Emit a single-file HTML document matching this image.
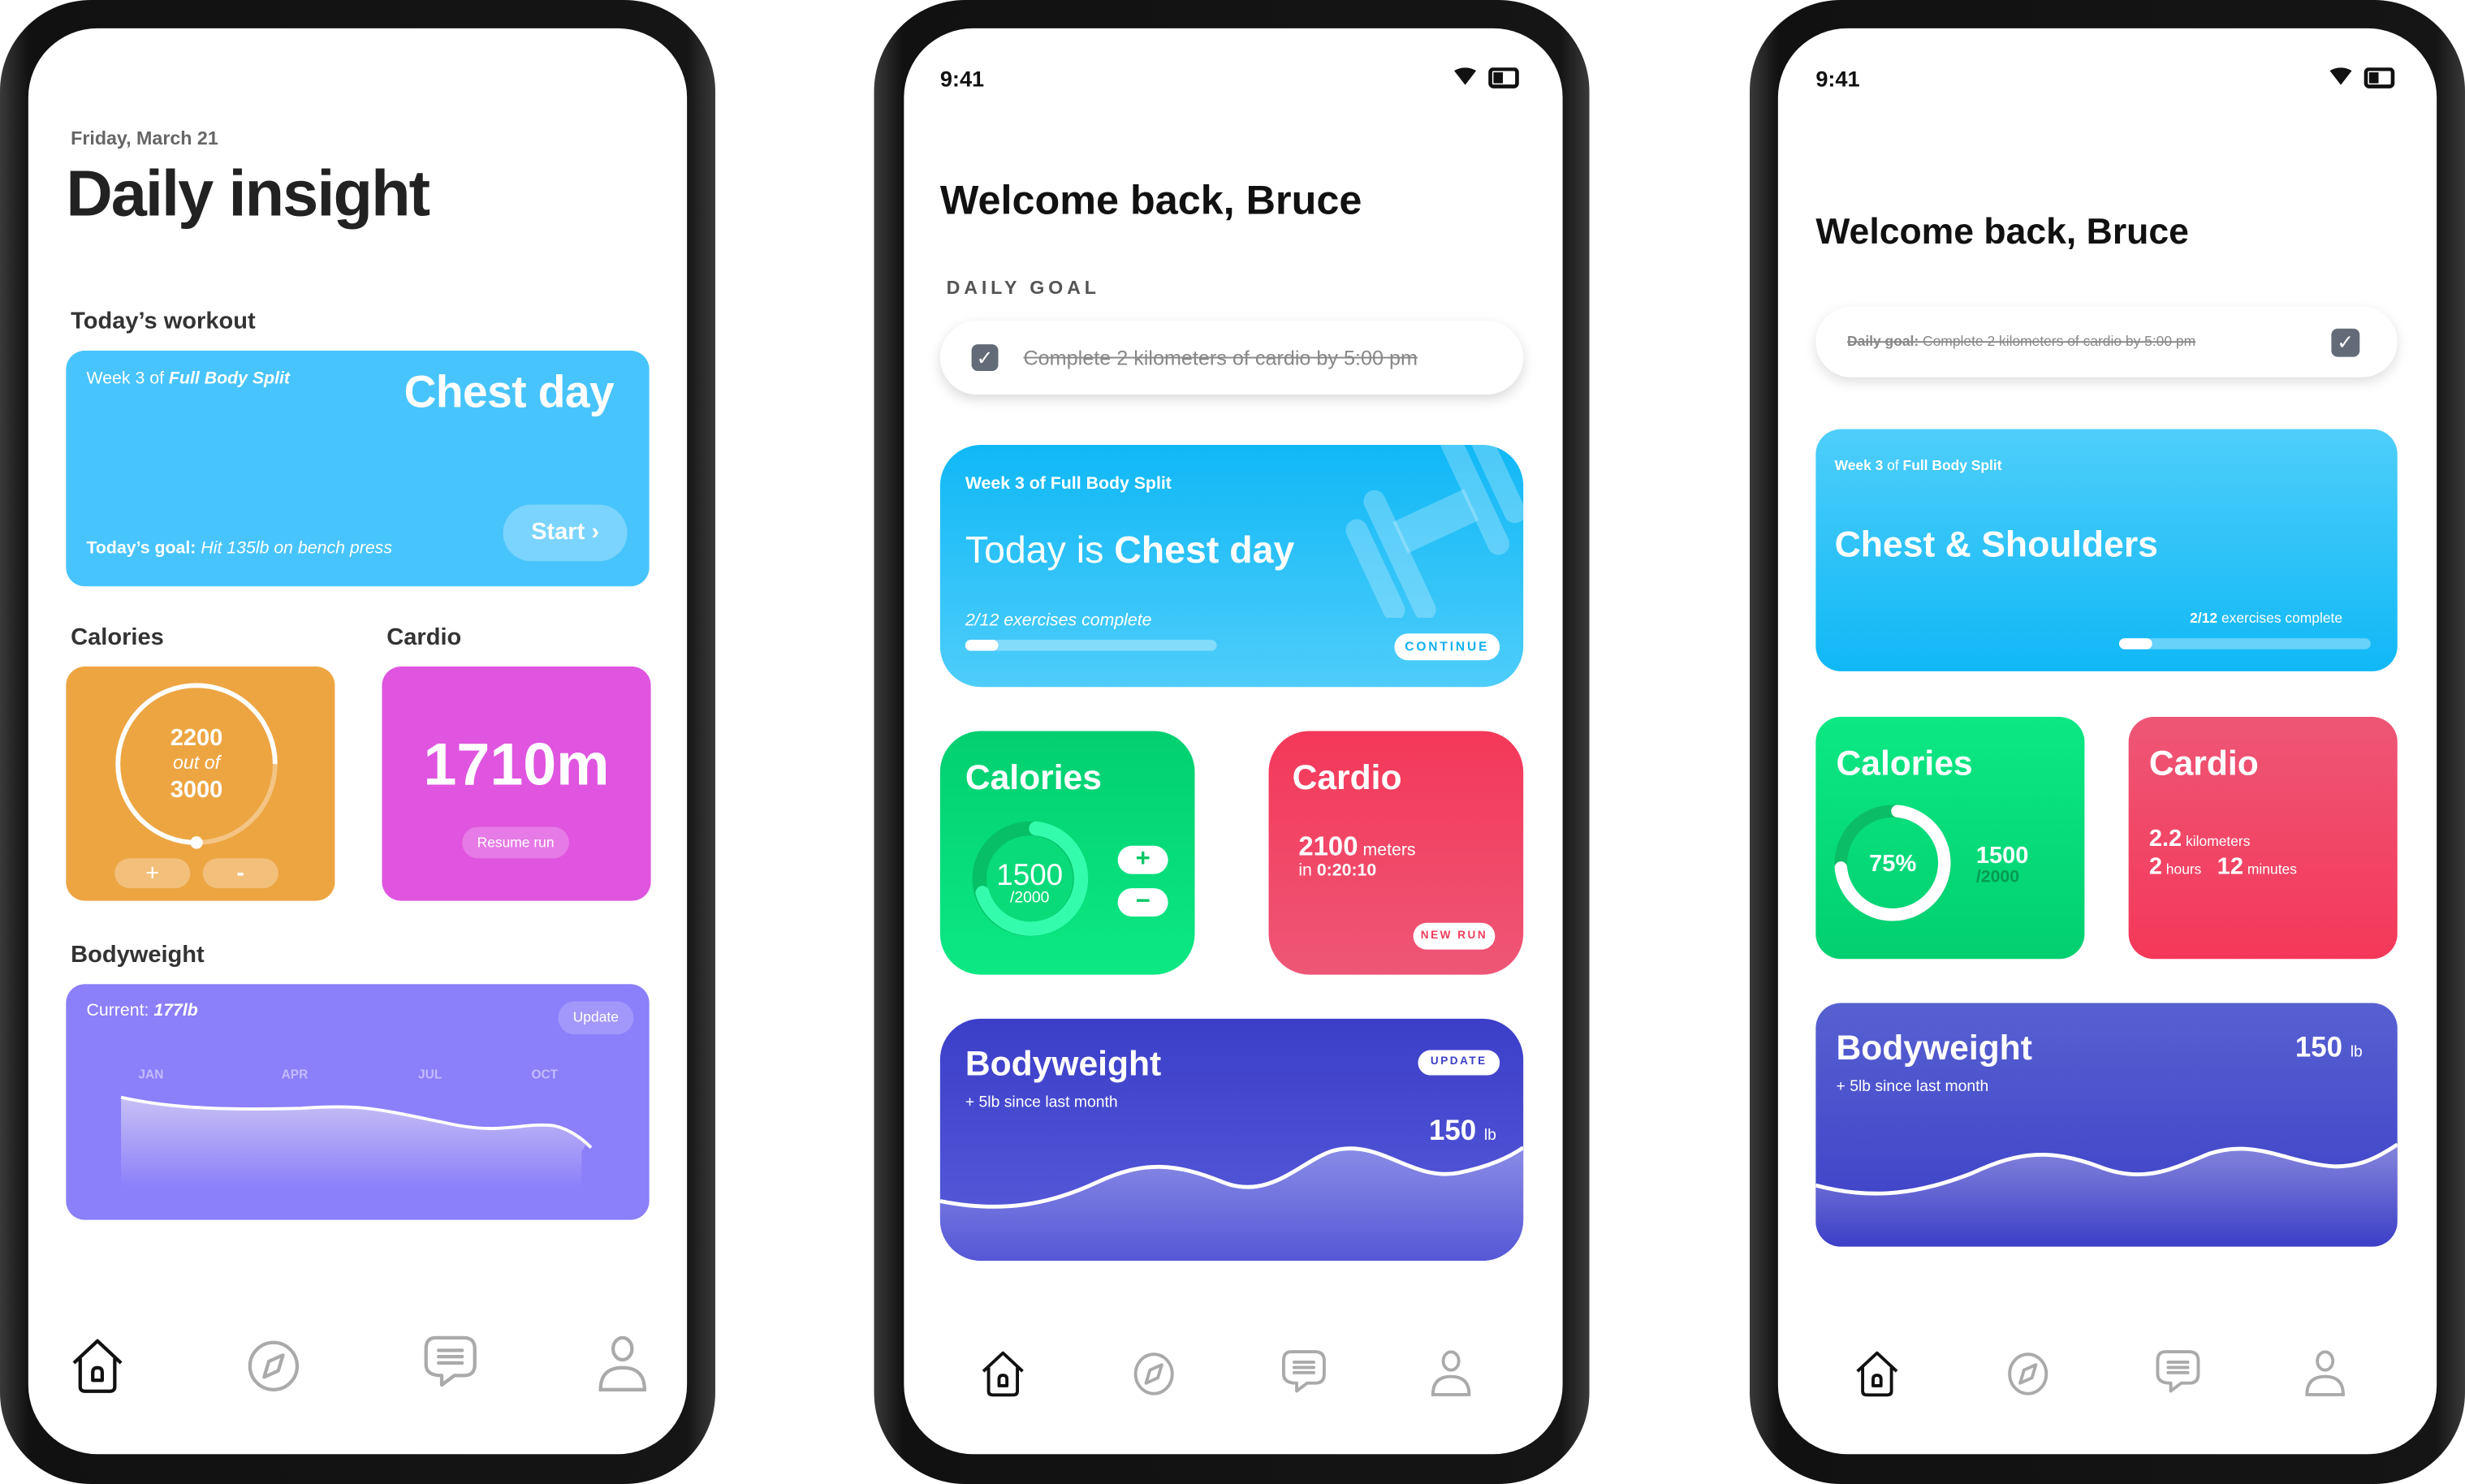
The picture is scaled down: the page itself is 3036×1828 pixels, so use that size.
<!DOCTYPE html>
<html><head><meta charset="utf-8"><style>
html,body{margin:0;padding:0;background:#fff;width:3036px;height:1828px;overflow:hidden}
#s{position:absolute;left:0;top:0;width:1568px;height:944px;transform:scale(1.93622,1.93644);transform-origin:0 0;font-family:"Liberation Sans",sans-serif}
.a{position:absolute;line-height:1;white-space:nowrap}
.ph{position:absolute;top:0;width:455px;height:944px;border-radius:58px;background:linear-gradient(90deg,#3a3a3a,#111 4%,#151515 96%,#3a3a3a)}
.sc{position:absolute;top:18px;width:419px;height:907px;border-radius:44px;background:#fff;overflow:hidden}
.w{color:#fff}
.b{font-weight:bold}
.pill{position:absolute;border-radius:20px;text-align:center;font-weight:bold}
</style></head><body><div id="s">

<!-- PHONE 1 -->
<div class="ph" style="left:0"></div>
<div class="sc" style="left:18px">
 <div class="a b" style="left:27px;top:64px;font-size:12px;color:#666">Friday, March 21</div>
 <div class="a b" style="left:24px;top:85px;font-size:41px;color:#222;letter-spacing:-1px">Daily insight</div>
 <div class="a b" style="left:27px;top:179px;font-size:15px;color:#333">Today’s workout</div>
 <div class="a" style="left:24px;top:205px;width:371px;height:150px;border-radius:12px;background:#48c4fc">
  <div class="a w" style="left:13px;top:13px;font-size:11px">Week 3 of <b><i>Full Body Split</i></b></div>
  <div class="a w b" style="left:215px;top:13px;font-size:28.5px;letter-spacing:-0.3px">Chest day</div>
  <div class="pill w" style="left:278px;top:98px;width:79px;height:36px;line-height:36px;background:rgba(255,255,255,.28);font-size:15px">Start ›</div>
  <div class="a w" style="left:13px;top:121px;font-size:11px"><b>Today’s goal:</b> <i>Hit 135lb on bench press</i></div>
 </div>
 <div class="a b" style="left:27px;top:380px;font-size:15px;color:#333">Calories</div>
 <div class="a b" style="left:228px;top:380px;font-size:15px;color:#333">Cardio</div>
 <div class="a" style="left:24px;top:406px;width:171px;height:149px;border-radius:12px;background:#eda542">
  <svg class="a" style="left:0;top:0" width="171" height="149"><circle cx="83" cy="62" r="50" fill="none" stroke="rgba(255,255,255,.35)" stroke-width="3"/><path d="M133 62 A50 50 0 1 0 83 112" fill="none" stroke="#fff" stroke-width="3"/><circle cx="83" cy="112" r="4" fill="#fff"/></svg>
  <div class="a w b" style="left:0;width:166px;text-align:center;top:38px;font-size:15px">2200</div>
  <div class="a w" style="left:0;width:166px;text-align:center;top:55px;font-size:12px;font-style:italic">out of</div>
  <div class="a w b" style="left:0;width:166px;text-align:center;top:71px;font-size:15px">3000</div>
  <div class="pill w" style="left:31px;top:122px;width:48px;height:19px;line-height:19px;background:rgba(255,255,255,.3);font-size:15px;font-weight:normal">+</div>
  <div class="pill w" style="left:87px;top:122px;width:48px;height:19px;line-height:19px;background:rgba(255,255,255,.3);font-size:15px">-</div>
 </div>
 <div class="a" style="left:225px;top:406px;width:171px;height:149px;border-radius:12px;background:#df55df">
  <div class="a w b" style="left:0;width:171px;text-align:center;top:44px;font-size:38px">1710m</div>
  <div class="pill w" style="left:51px;top:102px;width:68px;height:20px;line-height:20px;background:rgba(255,255,255,.22);font-size:9px;font-weight:normal">Resume run</div>
 </div>
 <div class="a b" style="left:27px;top:582px;font-size:15px;color:#333">Bodyweight</div>
 <div class="a" style="left:24px;top:608px;width:371px;height:150px;border-radius:12px;background:#8b7ffa;overflow:hidden">
  <div class="a w" style="left:13px;top:12px;font-size:11px">Current: <b><i>177lb</i></b></div>
  <div class="pill w" style="left:313px;top:11px;width:48px;height:21px;line-height:21px;background:rgba(255,255,255,.2);font-size:9px;font-weight:normal">Update</div>
  <div class="a b" style="left:46px;top:54px;font-size:8px;color:#c4bcff">JAN</div>
  <div class="a b" style="left:137px;top:54px;font-size:8px;color:#c4bcff">APR</div>
  <div class="a b" style="left:224px;top:54px;font-size:8px;color:#c4bcff">JUL</div>
  <div class="a b" style="left:296px;top:54px;font-size:8px;color:#c4bcff">OCT</div>
  <svg class="a" style="left:0;top:0" width="371" height="150"><defs><linearGradient id="g1" x1="0" y1="0" x2="0" y2="1"><stop offset="0" stop-color="#c8c0f5"/><stop offset="1" stop-color="#8b7ffa"/></linearGradient></defs>
  <path d="M35 72 C70 80 110 80 150 79 C190 76 200 80 250 90 C280 95 290 88 310 90 C325 93 335 100 328 106 L328 130 L35 130Z" fill="url(#g1)"/>
  <path d="M35 72 C70 80 110 80 150 79 C190 76 200 80 250 90 C280 95 290 88 310 90 C320 92 328 98 334 104" fill="none" stroke="#fff" stroke-width="2"/></svg>
 </div>
 <svg class="a" style="left:26px;top:833px" width="36" height="36" viewBox="0 0 36 36" fill="none" stroke="#111" stroke-width="2.2" stroke-linejoin="round"><path d="M3 16 L18 2 L33 16 M7 13 V31 Q7 34 10 34 H26 Q29 34 29 31 V13"/><path d="M15 27 V22 Q15 19 18 19 Q21 19 21 22 V27 Z"/></svg>
 <svg class="a" style="left:138px;top:833px" width="36" height="36" viewBox="0 0 36 36" fill="none" stroke="#aaa" stroke-width="2.2" stroke-linejoin="round"><circle cx="18" cy="18" r="15"/><path d="M24 11 L21 21 L12 25 L15 15 Z"/></svg>
 <svg class="a" style="left:250px;top:831px" width="36" height="38" viewBox="0 0 36 38" fill="none" stroke="#aaa" stroke-width="2.2" stroke-linecap="round" stroke-linejoin="round"><path d="M9 2 H27 Q34 2 34 9 V19 Q34 26 27 26 H21 L13 32 V26 Q3 26 3 19 V9 Q3 2 9 2Z"/><path d="M11 10 H26 M11 14 H26 M11 18 H26"/></svg>
 <svg class="a" style="left:361px;top:831px" width="34" height="38" viewBox="0 0 34 38" fill="none" stroke="#aaa" stroke-width="2.2"><ellipse cx="17" cy="9" rx="6" ry="7"/><path d="M3 35 Q3 21 17 21 Q31 21 31 35 Z"/></svg>
</div>

<!-- PHONE 2 -->
<div class="ph" style="left:556px"></div>
<div class="sc" style="left:575px">
 <div class="a b" style="left:23px;top:25px;font-size:14px;color:#111">9:41</div>
 <svg class="a" style="left:349px;top:25px" width="44" height="14"><path d="M1 2 Q8 -2 15 2 L8 11 Z" fill="#111"/><rect x="24" y="1" width="17" height="11" rx="2" fill="none" stroke="#111" stroke-width="2.4"/><rect x="26" y="3" width="6" height="7" fill="#111"/></svg>
 <div class="a b" style="left:23px;top:96px;font-size:26px;color:#111">Welcome back, Bruce</div>
 <div class="a b" style="left:27px;top:159px;font-size:12px;color:#555;letter-spacing:2.5px">DAILY GOAL</div>
 <div class="a" style="left:23px;top:186px;width:371px;height:47px;border-radius:24px;background:#fff;box-shadow:0 3px 8px rgba(0,0,0,.15)">
  <div class="a" style="left:20px;top:15px;width:17px;height:17px;border-radius:4px;background:#636b78;color:#fff;font-size:13px;text-align:center;line-height:17px">✓</div>
  <div class="a" style="left:53px;top:17px;font-size:13px;color:#888;text-decoration:line-through">Complete 2 kilometers of cardio by 5:00 pm</div>
 </div>
 <div class="a" style="left:23px;top:265px;width:371px;height:154px;border-radius:26px;background:linear-gradient(180deg,#10b8f6,#4ecdfa);overflow:hidden">
  <svg class="a" style="left:230px;top:-10px" width="150" height="120" fill="rgba(255,255,255,.25)"><g transform="rotate(-25 75 60)"><rect x="30" y="40" width="14" height="70" rx="7"/><rect x="48" y="28" width="14" height="90" rx="7"/><rect x="60" y="52" width="50" height="22"/><rect x="108" y="10" width="14" height="90" rx="7"/><rect x="126" y="16" width="14" height="70" rx="7"/></g></svg>
  <div class="a w b" style="left:16px;top:20px;font-size:11px">Week 3 of Full Body Split</div>
  <div class="a w" style="left:16px;top:56px;font-size:24px">Today is <b>Chest day</b></div>
  <div class="a w" style="left:16px;top:107px;font-size:11px;font-style:italic">2/12 exercises complete</div>
  <div class="a" style="left:16px;top:124px;width:160px;height:7px;border-radius:4px;background:rgba(255,255,255,.35)"><div class="a" style="left:0;top:0;width:21px;height:7px;border-radius:4px;background:#fff"></div></div>
  <div class="pill" style="left:289px;top:120px;width:67px;height:17px;line-height:17px;background:#fff;color:#10b0ef;font-size:8px;letter-spacing:1.5px">CONTINUE</div>
 </div>
 <div class="a" style="left:23px;top:447px;width:162px;height:155px;border-radius:26px;background:linear-gradient(180deg,#02cf70,#0ce884)">
  <div class="a w b" style="left:16px;top:19px;font-size:22px">Calories</div>
  <svg class="a" style="left:16px;top:52px" width="84" height="86"><circle cx="41" cy="42" r="32" fill="none" stroke="#06bf66" stroke-width="9"/><path d="M45 10 A32 32 0 1 1 11 51" fill="none" stroke="#33fdad" stroke-width="9" stroke-linecap="round"/><circle cx="41" cy="42" r="27" fill="#0adb7a"/></svg>
  <div class="a w" style="left:16px;top:83px;width:82px;text-align:center;font-size:19px">1500</div>
  <div class="a w" style="left:16px;top:102px;width:82px;text-align:center;font-size:10px">/2000</div>
  <div class="pill" style="left:113px;top:73px;width:32px;height:18px;line-height:18px;background:#fff;color:#05c765;font-size:16px">+</div>
  <div class="pill" style="left:113px;top:100px;width:32px;height:18px;line-height:17px;background:#fff;color:#05c765;font-size:16px">−</div>
 </div>
 <div class="a" style="left:232px;top:447px;width:162px;height:155px;border-radius:26px;background:linear-gradient(180deg,#f43859,#ee5676)">
  <div class="a w b" style="left:15px;top:19px;font-size:22px">Cardio</div>
  <div class="a w" style="left:19px;top:65px;font-size:11px"><b style="font-size:17px">2100</b> meters</div>
  <div class="a w" style="left:19px;top:84px;font-size:11px">in <b>0:20:10</b></div>
  <div class="pill" style="left:92px;top:122px;width:52px;height:17px;line-height:17px;background:#fff;color:#f03c5c;font-size:7px;letter-spacing:1.3px">NEW RUN</div>
 </div>
 <div class="a" style="left:23px;top:630px;width:371px;height:154px;border-radius:26px;background:linear-gradient(180deg,#3b3ec8,#5a5ddb);overflow:hidden">
  <div class="a w b" style="left:16px;top:18px;font-size:22px">Bodyweight</div>
  <div class="a w" style="left:16px;top:49px;font-size:10px">+ 5lb since last month</div>
  <div class="pill" style="left:304px;top:20px;width:52px;height:16px;line-height:16px;background:#fff;color:#3b3ec8;font-size:7px;letter-spacing:1.3px">UPDATE</div>
  <div class="a w b" style="left:311px;top:62px;font-size:18px">150 <span style="font-size:10px;font-weight:normal">lb</span></div>
  <svg class="a" style="left:0;top:0" width="371" height="154"><defs><linearGradient id="g2" x1="0" y1="0" x2="0" y2="1"><stop offset="0" stop-color="#8a8ce6"/><stop offset="1" stop-color="#5557d6"/></linearGradient></defs>
  <path d="M0 116 C40 124 70 118 100 104 C130 90 150 92 180 104 C210 116 230 90 250 84 C280 76 300 104 330 98 C350 94 362 88 371 82 L371 154 L0 154Z" fill="url(#g2)"/>
  <path d="M0 116 C40 124 70 118 100 104 C130 90 150 92 180 104 C210 116 230 90 250 84 C280 76 300 104 330 98 C350 94 362 88 371 82" fill="none" stroke="#fff" stroke-width="2.5"/></svg>
 </div>
 <svg class="a" style="left:48px;top:841px" width="30" height="30" viewBox="0 0 36 36" fill="none" stroke="#111" stroke-width="2.4" stroke-linejoin="round"><path d="M3 16 L18 2 L33 16 M7 13 V31 Q7 34 10 34 H26 Q29 34 29 31 V13"/><path d="M15 27 V22 Q15 19 18 19 Q21 19 21 22 V27 Z"/></svg>
 <svg class="a" style="left:144px;top:841px" width="30" height="30" viewBox="0 0 36 36" fill="none" stroke="#aaa" stroke-width="2.4" stroke-linejoin="round"><ellipse cx="18" cy="18" rx="14" ry="15"/><path d="M24 11 L21 21 L12 25 L15 15 Z"/></svg>
 <svg class="a" style="left:239px;top:840px" width="30" height="32" viewBox="0 0 36 38" fill="none" stroke="#aaa" stroke-width="2.4" stroke-linecap="round" stroke-linejoin="round"><path d="M9 2 H27 Q34 2 34 9 V19 Q34 26 27 26 H21 L13 32 V26 Q3 26 3 19 V9 Q3 2 9 2Z"/><path d="M11 10 H26 M11 14 H26 M11 18 H26"/></svg>
 <svg class="a" style="left:334px;top:840px" width="28" height="32" viewBox="0 0 34 38" fill="none" stroke="#aaa" stroke-width="2.4"><ellipse cx="17" cy="9" rx="6" ry="7"/><path d="M3 35 Q3 21 17 21 Q31 21 31 35 Z"/></svg>
</div>

<!-- PHONE 3 -->
<div class="ph" style="left:1113px"></div>
<div class="sc" style="left:1131px">
 <div class="a b" style="left:24px;top:25px;font-size:14px;color:#111">9:41</div>
 <svg class="a" style="left:350px;top:25px" width="44" height="14"><path d="M1 2 Q8 -2 15 2 L8 11 Z" fill="#111"/><rect x="24" y="1" width="17" height="11" rx="2" fill="none" stroke="#111" stroke-width="2.4"/><rect x="26" y="3" width="6" height="7" fill="#111"/></svg>
 <div class="a b" style="left:24px;top:118px;font-size:23px;color:#111">Welcome back, Bruce</div>
 <div class="a" style="left:24px;top:177px;width:370px;height:45px;border-radius:23px;background:#fff;box-shadow:0 3px 8px rgba(0,0,0,.13)">
  <div class="a" style="left:20px;top:18px;font-size:9px;color:#888;text-decoration:line-through"><b>Daily goal:</b> Complete 2 kilometers of cardio by 5:00 pm</div>
  <div class="a" style="left:328px;top:14px;width:18px;height:18px;border-radius:4px;background:#636b78;color:#fff;font-size:13px;text-align:center;line-height:18px">✓</div>
 </div>
 <div class="a" style="left:24px;top:255px;width:370px;height:154px;border-radius:16px;background:linear-gradient(180deg,#4ecefa,#10b8f6)">
  <div class="a w" style="left:12px;top:19px;font-size:9px"><b>Week 3</b> of <b>Full Body Split</b></div>
  <div class="a w b" style="left:12px;top:62px;font-size:23px">Chest &amp; Shoulders</div>
  <div class="a w" style="left:238px;top:116px;font-size:9px"><b>2/12</b> exercises complete</div>
  <div class="a" style="left:193px;top:133px;width:160px;height:7px;border-radius:4px;background:rgba(255,255,255,.35)"><div class="a" style="left:0;top:0;width:21px;height:7px;border-radius:4px;background:#fff"></div></div>
 </div>
 <div class="a" style="left:24px;top:438px;width:171px;height:154px;border-radius:16px;background:linear-gradient(180deg,#0ce884,#02cf70)">
  <div class="a w b" style="left:13px;top:19px;font-size:22px">Calories</div>
  <svg class="a" style="left:10px;top:54px" width="80" height="80"><circle cx="39" cy="39" r="33" fill="none" stroke="#0cbd68" stroke-width="8"/><path d="M42 6 A33 33 0 1 1 6 42" fill="none" stroke="#fff" stroke-width="8" stroke-linecap="round"/></svg>
  <div class="a w b" style="left:10px;top:86px;width:78px;text-align:center;font-size:15px">75%</div>
  <div class="a w b" style="left:102px;top:81px;font-size:15px">1500</div>
  <div class="a b" style="left:102px;top:97px;font-size:11px;color:#079a52">/2000</div>
 </div>
 <div class="a" style="left:223px;top:438px;width:171px;height:154px;border-radius:16px;background:linear-gradient(180deg,#ee5676,#f43859)">
  <div class="a w b" style="left:13px;top:19px;font-size:22px">Cardio</div>
  <div class="a w" style="left:13px;top:70px;font-size:9px"><b style="font-size:15px">2.2</b> kilometers</div>
  <div class="a w" style="left:13px;top:88px;font-size:9px"><b style="font-size:15px">2</b> hours &nbsp;&nbsp;&nbsp;<b style="font-size:15px">12</b> minutes</div>
 </div>
 <div class="a" style="left:24px;top:620px;width:370px;height:155px;border-radius:16px;background:linear-gradient(180deg,#5760d1,#3c3fc7);overflow:hidden">
  <div class="a w b" style="left:13px;top:18px;font-size:22px">Bodyweight</div>
  <div class="a w" style="left:13px;top:49px;font-size:10px">+ 5lb since last month</div>
  <div class="a w b" style="left:305px;top:19px;font-size:18px">150 <span style="font-size:10px;font-weight:normal">lb</span></div>
  <svg class="a" style="left:0;top:0" width="370" height="155"><defs><linearGradient id="g3" x1="0" y1="0" x2="0" y2="1"><stop offset="0" stop-color="#8585dc"/><stop offset="1" stop-color="#3c3fc7"/></linearGradient></defs>
  <path d="M0 116 C30 124 60 124 100 108 C130 94 150 93 180 104 C210 116 230 104 250 96 C280 86 300 102 330 104 C345 104 355 100 370 90 L370 155 L0 155Z" fill="url(#g3)"/>
  <path d="M0 116 C30 124 60 124 100 108 C130 94 150 93 180 104 C210 116 230 104 250 96 C280 86 300 102 330 104 C345 104 355 100 370 90" fill="none" stroke="#fff" stroke-width="2.5"/></svg>
 </div>
 <svg class="a" style="left:48px;top:841px" width="30" height="30" viewBox="0 0 36 36" fill="none" stroke="#111" stroke-width="2.4" stroke-linejoin="round"><path d="M3 16 L18 2 L33 16 M7 13 V31 Q7 34 10 34 H26 Q29 34 29 31 V13"/><path d="M15 27 V22 Q15 19 18 19 Q21 19 21 22 V27 Z"/></svg>
 <svg class="a" style="left:144px;top:841px" width="30" height="30" viewBox="0 0 36 36" fill="none" stroke="#aaa" stroke-width="2.4" stroke-linejoin="round"><ellipse cx="18" cy="18" rx="14" ry="15"/><path d="M24 11 L21 21 L12 25 L15 15 Z"/></svg>
 <svg class="a" style="left:239px;top:840px" width="30" height="32" viewBox="0 0 36 38" fill="none" stroke="#aaa" stroke-width="2.4" stroke-linecap="round" stroke-linejoin="round"><path d="M9 2 H27 Q34 2 34 9 V19 Q34 26 27 26 H21 L13 32 V26 Q3 26 3 19 V9 Q3 2 9 2Z"/><path d="M11 10 H26 M11 14 H26 M11 18 H26"/></svg>
 <svg class="a" style="left:334px;top:840px" width="28" height="32" viewBox="0 0 34 38" fill="none" stroke="#aaa" stroke-width="2.4"><ellipse cx="17" cy="9" rx="6" ry="7"/><path d="M3 35 Q3 21 17 21 Q31 21 31 35 Z"/></svg>
</div>

</div></body></html>
